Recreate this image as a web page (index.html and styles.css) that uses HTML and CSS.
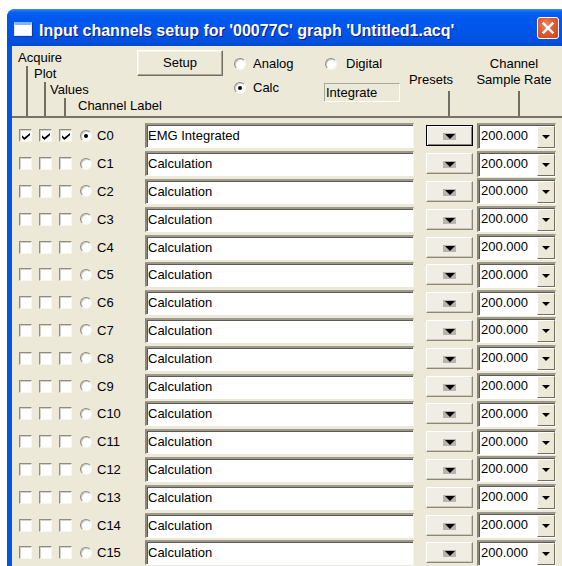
FILE: index.html
```html
<!DOCTYPE html>
<html>
<head>
<meta charset="utf-8">
<title>Input channels setup</title>
<link rel="stylesheet" href="styles.css">
</head>
<body>
<div class="window">
  <div class="titlebar">
    <span class="app-icon"></span>
    <span class="title">Input channels setup for '00077C' graph 'Untitled1.acq'</span>
    <span class="close"><svg width="22" height="22" viewBox="0 0 22 22"><path d="M6.5 6.5 L15.5 15.5 M15.5 6.5 L6.5 15.5" stroke="#fff" stroke-width="2.4" stroke-linecap="square"/></svg></span>
  </div>
  <div class="client">
    <div class="header">
      <div class="tree">
        <div class="t-label t-acq">Acquire</div>
        <div class="branch b1">
          <div class="t-label t-plot">Plot</div>
          <div class="branch b2">
            <div class="t-label t-val">Values</div>
            <div class="branch b3">
              <div class="t-label t-chan">Channel Label</div>
            </div>
          </div>
        </div>
      </div>
      <div class="col-setup"><button class="btn setup">Setup</button></div>
      <div class="col-mode">
        <div class="opt"><span class="radio"></span>Analog</div>
        <div class="opt"><span class="radio on"></span>Calc</div>
      </div>
      <div class="col-mode2">
        <div class="opt"><span class="radio"></span>Digital</div>
        <div class="static">Integrate</div>
      </div>
      <div class="col-head presets-head"><span class="h-text">Presets</span><i class="tick"></i></div>
      <div class="col-head rate-head"><span class="h-text">Channel<br>Sample Rate</span><i class="tick"></i></div>
    </div>
    <div class="sep"></div>
    <div class="rows">
      <div class="row">
        <span class="cb checked"></span><span class="cb checked"></span><span class="cb checked"></span>
        <span class="radio on"></span><span class="ch">C0</span>
        <span class="field">EMG Integrated</span>
        <span class="preset default"><i class="tri"></i></span>
        <span class="combo"><span class="val">200.000</span><span class="drop"></span></span>
      </div>
      <div class="row">
        <span class="cb"></span><span class="cb"></span><span class="cb"></span>
        <span class="radio"></span><span class="ch">C1</span>
        <span class="field">Calculation</span>
        <span class="preset"><i class="tri"></i></span>
        <span class="combo"><span class="val">200.000</span><span class="drop"></span></span>
      </div>
      <div class="row">
        <span class="cb"></span><span class="cb"></span><span class="cb"></span>
        <span class="radio"></span><span class="ch">C2</span>
        <span class="field">Calculation</span>
        <span class="preset"><i class="tri"></i></span>
        <span class="combo"><span class="val">200.000</span><span class="drop"></span></span>
      </div>
      <div class="row">
        <span class="cb"></span><span class="cb"></span><span class="cb"></span>
        <span class="radio"></span><span class="ch">C3</span>
        <span class="field">Calculation</span>
        <span class="preset"><i class="tri"></i></span>
        <span class="combo"><span class="val">200.000</span><span class="drop"></span></span>
      </div>
      <div class="row">
        <span class="cb"></span><span class="cb"></span><span class="cb"></span>
        <span class="radio"></span><span class="ch">C4</span>
        <span class="field">Calculation</span>
        <span class="preset"><i class="tri"></i></span>
        <span class="combo"><span class="val">200.000</span><span class="drop"></span></span>
      </div>
      <div class="row">
        <span class="cb"></span><span class="cb"></span><span class="cb"></span>
        <span class="radio"></span><span class="ch">C5</span>
        <span class="field">Calculation</span>
        <span class="preset"><i class="tri"></i></span>
        <span class="combo"><span class="val">200.000</span><span class="drop"></span></span>
      </div>
      <div class="row">
        <span class="cb"></span><span class="cb"></span><span class="cb"></span>
        <span class="radio"></span><span class="ch">C6</span>
        <span class="field">Calculation</span>
        <span class="preset"><i class="tri"></i></span>
        <span class="combo"><span class="val">200.000</span><span class="drop"></span></span>
      </div>
      <div class="row">
        <span class="cb"></span><span class="cb"></span><span class="cb"></span>
        <span class="radio"></span><span class="ch">C7</span>
        <span class="field">Calculation</span>
        <span class="preset"><i class="tri"></i></span>
        <span class="combo"><span class="val">200.000</span><span class="drop"></span></span>
      </div>
      <div class="row">
        <span class="cb"></span><span class="cb"></span><span class="cb"></span>
        <span class="radio"></span><span class="ch">C8</span>
        <span class="field">Calculation</span>
        <span class="preset"><i class="tri"></i></span>
        <span class="combo"><span class="val">200.000</span><span class="drop"></span></span>
      </div>
      <div class="row">
        <span class="cb"></span><span class="cb"></span><span class="cb"></span>
        <span class="radio"></span><span class="ch">C9</span>
        <span class="field">Calculation</span>
        <span class="preset"><i class="tri"></i></span>
        <span class="combo"><span class="val">200.000</span><span class="drop"></span></span>
      </div>
      <div class="row">
        <span class="cb"></span><span class="cb"></span><span class="cb"></span>
        <span class="radio"></span><span class="ch">C10</span>
        <span class="field">Calculation</span>
        <span class="preset"><i class="tri"></i></span>
        <span class="combo"><span class="val">200.000</span><span class="drop"></span></span>
      </div>
      <div class="row">
        <span class="cb"></span><span class="cb"></span><span class="cb"></span>
        <span class="radio"></span><span class="ch">C11</span>
        <span class="field">Calculation</span>
        <span class="preset"><i class="tri"></i></span>
        <span class="combo"><span class="val">200.000</span><span class="drop"></span></span>
      </div>
      <div class="row">
        <span class="cb"></span><span class="cb"></span><span class="cb"></span>
        <span class="radio"></span><span class="ch">C12</span>
        <span class="field">Calculation</span>
        <span class="preset"><i class="tri"></i></span>
        <span class="combo"><span class="val">200.000</span><span class="drop"></span></span>
      </div>
      <div class="row">
        <span class="cb"></span><span class="cb"></span><span class="cb"></span>
        <span class="radio"></span><span class="ch">C13</span>
        <span class="field">Calculation</span>
        <span class="preset"><i class="tri"></i></span>
        <span class="combo"><span class="val">200.000</span><span class="drop"></span></span>
      </div>
      <div class="row">
        <span class="cb"></span><span class="cb"></span><span class="cb"></span>
        <span class="radio"></span><span class="ch">C14</span>
        <span class="field">Calculation</span>
        <span class="preset"><i class="tri"></i></span>
        <span class="combo"><span class="val">200.000</span><span class="drop"></span></span>
      </div>
      <div class="row">
        <span class="cb"></span><span class="cb"></span><span class="cb"></span>
        <span class="radio"></span><span class="ch">C15</span>
        <span class="field">Calculation</span>
        <span class="preset"><i class="tri"></i></span>
        <span class="combo"><span class="val">200.000</span><span class="drop"></span></span>
      </div>
    </div>
  </div>
</div>
</body>
</html>
```
FILE: styles.css
```css
html, body {
  margin: 0;
  padding: 0;
}
body {
  width: 562px;
  height: 566px;
  overflow: hidden;
  background: #fff;
  font-family: "Liberation Sans", Arial, sans-serif;
  font-size: 13px;
  color: #000;
}

/* ---- window frame ---- */
.window {
  margin: 9px 0 0 7px;
  width: 560px;
  height: 600px;
  background: #0055e5;
  border-radius: 8px 8px 0 0;
  display: flex;
  flex-direction: column;
}
.titlebar {
  height: 37px;
  flex: none;
  display: flex;
  align-items: flex-start;
  border-radius: 8px 8px 0 0;
  background: linear-gradient(to bottom, #3c8ffc 0, #0a61ef 3px, #0058ee 9px, #0055e8 60%, #0050dd 90%, #0049cf 100%);
}
.app-icon {
  margin: 13px 0 0 7px;
  width: 16px;
  height: 10px;
  background: #fff;
  border: 1px solid #dfe8fa;
  border-top: 3px solid #86b1f2;
  box-shadow: 1px 1px 0 #0a3aa8;
  flex: none;
}
.title {
  margin: 12px 0 0 7px;
  line-height: 20px;
  font-size: 16px;
  font-weight: bold;
  color: #fff;
  white-space: nowrap;
  text-shadow: 1px 1px 0 #0a1b86;
}
.close {
  margin: 8px 8px 0 auto;
  width: 20px;
  height: 20px;
  border: 1px solid #fff;
  border-radius: 3px;
  background: radial-gradient(circle at 40% 35%, #ec8a68 0, #e25a32 45%, #c9421f 100%);
  flex: none;
}
.close svg {
  display: block;
  margin: -1px 0 0 -1px;
}

.client {
  flex: 1;
  margin-left: 5px;
  background: #ece9d8;
}

/* ---- header ---- */
.header {
  height: 70px;
  display: flex;
  line-height: 16px;
}
.tree {
  width: 125px;
  padding-top: 4px;
  display: flex;
  flex-direction: column;
  flex: none;
  white-space: nowrap;
}
.t-acq {
  padding-left: 6px;
}
.branch {
  flex: 1;
  display: flex;
  flex-direction: column;
  border-left: 2px solid #716f64;
}
.b1 { margin-left: 14px; }
.b2 { margin-left: 16px; }
.b3 { margin-left: 18px; }
.t-plot { padding-left: 6px; }
.t-val { padding-left: 4px; }
.t-chan { padding-left: 12px; }

.col-setup {
  width: 97px;
  padding-top: 4px;
  flex: none;
}
.btn {
  font: inherit;
  color: #000;
  padding: 0;
}
.setup {
  display: block;
  width: 86px;
  height: 26px;
  border: 1px solid;
  border-color: #fff #716f64 #716f64 #fff;
  box-shadow: inset -1px -1px 0 #aca899, inset 1px 1px 0 #f4f3ee;
  background: #ece9d8;
  border-radius: 1px;
  line-height: 20px;
}

.col-mode {
  width: 90px;
  padding-top: 10px;
  flex: none;
}
.col-mode2 {
  width: 76px;
  padding-top: 10px;
  flex: none;
}
.opt {
  display: flex;
  align-items: center;
  height: 16px;
  white-space: nowrap;
}
.col-mode .opt + .opt {
  margin-top: 8px;
}
.col-mode .opt .radio {
  margin-right: 7px;
}
.col-mode2 .opt .radio {
  margin: 0 9px 0 1px;
}
.static {
  margin-top: 11px;
  width: 73px;
  height: 17px;
  border: 1px solid;
  border-color: #aca899 #fff #fff #aca899;
  padding-left: 1px;
  line-height: 17px;
  white-space: nowrap;
}

.col-head {
  flex: none;
  display: flex;
  flex-direction: column;
}
.presets-head {
  width: 62px;
  padding-top: 26px;
}
.presets-head .h-text {
  text-align: right;
  padding-right: 9px;
}
.presets-head .tick {
  margin: 3px 0 0 48px;
}
.rate-head {
  width: 104px;
  padding-top: 10px;
}
.rate-head .h-text {
  text-align: center;
}
.rate-head .tick {
  margin: 3px 0 0 56px;
}
.tick {
  flex: 1;
  width: 2px;
  background: #716f64;
}

.sep {
  height: 2px;
  background: #76736a;
}

/* ---- channel rows ---- */
.rows {
  padding-top: 4px;
}
.row {
  height: 27.8px;
  display: flex;
  align-items: center;
  padding-left: 7px;
  white-space: nowrap;
}
.cb {
  width: 11px;
  height: 11px;
  margin-right: 7px;
  flex: none;
  background: #fff;
  border: 1px solid;
  border-color: #8f8c80 #f7f6f0 #f7f6f0 #8f8c80;
  box-shadow: inset 1px 1px 0 #d6d3c6;
  display: flex;
  align-items: center;
  justify-content: center;
}
.cb:nth-child(3) {
  margin-right: 8px;
}
/* check mark cut out of a black square */
.cb.checked::after {
  content: "";
  width: 8px;
  height: 7px;
  margin: 1px 0 0 1px;
  background: #000;
  clip-path: polygon(0 35%, 30% 65%, 100% 0, 100% 35%, 30% 100%, 0 70%);
}
.radio {
  width: 10px;
  height: 10px;
  flex: none;
  border-radius: 50%;
  background: #fff;
  border: 1px solid;
  border-color: #8f8c80 #f7f6f0 #f7f6f0 #8f8c80;
  box-shadow: inset 1px 1px 0 #cfccbf;
  display: flex;
  align-items: center;
  justify-content: center;
}
.radio.on::after {
  content: "";
  width: 4px;
  height: 4px;
  border-radius: 50%;
  background: #000;
}
.row .radio {
  margin-right: 5px;
}
.ch {
  width: 48px;
  flex: none;
}
.field {
  width: 265px;
  height: 22px;
  flex: none;
  background: #fff;
  border-style: solid;
  border-width: 2px 1px 1px 2px;
  border-color: #9d9a8c #f4f3ee #fff #8a877a;
  box-shadow: inset 1px 1px 0 #5c5a52;
  line-height: 21px;
  padding-left: 1px;
  margin-right: 12px;
}
.preset {
  width: 45px;
  height: 19px;
  flex: none;
  border: 1px solid;
  border-color: #fff #8a877a #8a877a #fff;
  box-shadow: inset -1px -1px 0 #cdcabb;
  background: #f0eee4;
  display: flex;
  align-items: center;
  justify-content: center;
  margin-right: 4px;
}
.preset.default {
  border: 1px solid #000;
  box-shadow: inset 1px 1px 0 #fff, inset -1px -1px 0 #8a877a;
}
.tri {
  width: 13px;
  height: 7px;
  background: #b6b4ac;
  display: flex;
  justify-content: center;
  margin-top: 2px;
}
.tri::after {
  content: "";
  margin-top: 1px;
  border-style: solid;
  border-width: 5px 5px 0 5px;
  border-color: #000 transparent transparent transparent;
}
.combo {
  width: 76px;
  height: 23px;
  flex: none;
  display: flex;
  background: #fff;
  border-style: solid;
  border-width: 2px 1px 1px 2px;
  border-color: #9d9a8c #f4f3ee #fff #8a877a;
  box-shadow: inset 1px 1px 0 #5c5a52;
}
.val {
  flex: 1;
  line-height: 22px;
  padding-left: 2px;
}
.drop {
  width: 18px;
  margin: 1px 0 0;
  flex: none;
  background: #ece9d8;
  border: 1px solid;
  border-color: #fff #716f64 #716f64 #fff;
  box-sizing: border-box;
  display: flex;
  align-items: center;
  justify-content: center;
}
.drop::after {
  content: "";
  border-style: solid;
  border-width: 4px 4px 0 4px;
  border-color: #000 transparent transparent transparent;
}
```
